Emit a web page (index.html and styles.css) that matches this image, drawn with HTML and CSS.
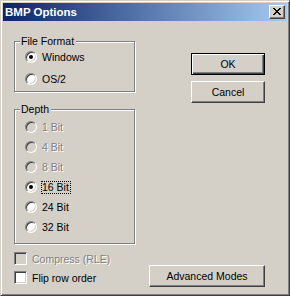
FILE: index.html
```html
<!DOCTYPE html>
<html>
<head>
<meta charset="utf-8">
<link rel="stylesheet" href="styles.css">
</head>
<body>
<div class="window">
  <div class="titlebar">
    <span class="title">BMP Options</span>
    <span class="close"><svg width="8" height="7" viewBox="0 0 8 7"><path d="M0 0h2v1h-2zM6 0h2v1h-2zM1 1h2v1h-2zM5 1h2v1h-2zM2 2h4v1h-4zM3 3h2v1h-2zM2 4h4v1h-4zM1 5h2v1h-2zM5 5h2v1h-2zM0 6h2v1h-2zM6 6h2v1h-2z" fill="#000"/></svg></span>
  </div>
  <div class="content">
    <div class="left">
      <div class="group group-format">
        <span class="legend">File Format</span>
        <div class="row"><span class="radio checked"></span><span class="label">Windows</span></div>
        <div class="row"><span class="radio"></span><span class="label">OS/2</span></div>
      </div>
      <div class="group group-depth">
        <span class="legend">Depth</span>
        <div class="row disabled"><span class="radio"></span><span class="label">1 Bit</span></div>
        <div class="row disabled"><span class="radio"></span><span class="label">4 Bit</span></div>
        <div class="row disabled"><span class="radio"></span><span class="label">8 Bit</span></div>
        <div class="row"><span class="radio checked"></span><span class="label focus">16 Bit</span></div>
        <div class="row"><span class="radio"></span><span class="label">24 Bit</span></div>
        <div class="row"><span class="radio"></span><span class="label">32 Bit</span></div>
      </div>
      <div class="checks">
        <div class="crow disabled"><span class="check"></span><span class="clabel">Compress (RLE)</span></div>
        <div class="crow"><span class="check"></span><span class="clabel">Flip row order</span></div>
      </div>
    </div>
    <div class="right">
      <div class="btn default">OK</div>
      <div class="btn cancel">Cancel</div>
      <div class="btn advanced">Advanced Modes</div>
    </div>
  </div>
</div>
</body>
</html>
```

FILE: styles.css
```css
html, body {
  margin: 0;
  padding: 0;
  background: #d4d0c8;
}
body {
  font-family: "Liberation Sans", Arial, sans-serif;
  font-size: 10.5px;
  color: #000;
}
.window {
  width: 290px;
  height: 296px;
  box-sizing: border-box;
  border: 1px solid;
  border-color: #d4d0c8 #404040 #404040 #d4d0c8;
  box-shadow: inset 1px 1px 0 #fff, inset -1px -1px 0 #808080;
  padding: 2px;
  background: #d4d0c8;
  display: flex;
  flex-direction: column;
}
.titlebar {
  height: 18px;
  flex: none;
  background: linear-gradient(to right, #0a246a, #a6caf0);
  display: flex;
  align-items: center;
  padding: 0 2px 0 2px;
}
.title {
  flex: 1;
  color: #fff;
  font-weight: bold;
  font-size: 11.5px;
  line-height: 18px;
}
.close {
  width: 16px;
  height: 14px;
  box-sizing: border-box;
  background: #d4d0c8;
  border: 1px solid;
  border-color: #fff #404040 #404040 #fff;
  box-shadow: inset -1px -1px 0 #808080;
  display: flex;
  align-items: center;
  justify-content: center;
  padding: 0 1px 1px 0;
}
.close svg { display: block; shape-rendering: crispEdges; }
.content {
  flex: 1;
  display: flex;
  padding: 20px 22px 8px 11px;
}
.left {
  width: 121px;
  flex: none;
  display: flex;
  flex-direction: column;
}
.group {
  position: relative;
  box-sizing: border-box;
  border: 1px solid #808080;
  box-shadow: 1px 1px 0 #fff, inset 1px 1px 0 #fff;
  padding-left: 10px;
}
.legend {
  position: absolute;
  left: 5px;
  top: -8px;
  padding: 0 2px 0 1px;
  background: #d4d0c8;
  line-height: 14px;
}
.group-format {
  height: 51px;
  padding-top: 5px;
}
.group-format .row + .row { margin-top: 2px; }
.group-depth {
  margin-top: 17px;
  height: 135px;
  padding-top: 7px;
}
.row {
  height: 20px;
  display: flex;
  align-items: center;
}
.radio {
  width: 12px;
  height: 12px;
  box-sizing: border-box;
  border-radius: 50%;
  border: 1px solid;
  border-color: #808080 #fff #fff #808080;
  box-shadow: inset 1px 1px 0 #404040, inset -1px -1px 0 #d4d0c8;
  background: #fff;
  position: relative;
  flex: none;
}
.radio.checked::after {
  content: "";
  position: absolute;
  left: 3px;
  top: 3px;
  width: 4px;
  height: 4px;
  border-radius: 50%;
  background: #000;
}
.label {
  margin-left: 4px;
  border: 1px dotted transparent;
  padding: 0 1px 0 0;
  line-height: 11px;
}
.label.focus { border-color: #000; }
.disabled .radio { background: #d4d0c8; }
.disabled .label, .disabled .clabel {
  color: #808080;
  text-shadow: 1px 1px 0 #fff;
}
.checks {
  margin-top: 5px;
}
.crow {
  height: 19px;
  display: flex;
  align-items: center;
}
.check {
  width: 13px;
  height: 13px;
  box-sizing: border-box;
  border: 1px solid;
  border-color: #808080 #fff #fff #808080;
  box-shadow: inset 1px 1px 0 #404040, inset -1px -1px 0 #d4d0c8;
  background: #fff;
  flex: none;
}
.disabled .check { background: #d4d0c8; }
.clabel { margin-left: 5px; }
.right {
  flex: 1;
  display: flex;
  flex-direction: column;
  align-items: flex-end;
}
.btn {
  box-sizing: border-box;
  height: 22px;
  background: #d4d0c8;
  border: 1px solid;
  border-color: #fff #404040 #404040 #fff;
  box-shadow: inset -1px -1px 0 #808080;
  display: flex;
  align-items: center;
  justify-content: center;
  width: 74px;
}
.btn.default {
  margin-top: 12px;
  border-color: #000;
  box-shadow: inset 1px 1px 0 #fff, inset -1px -1px 0 #404040, inset -2px -2px 0 #808080;
}
.btn.cancel { margin-top: 6px; }
.btn.advanced {
  margin-top: auto;
  width: 116px;
}
```
